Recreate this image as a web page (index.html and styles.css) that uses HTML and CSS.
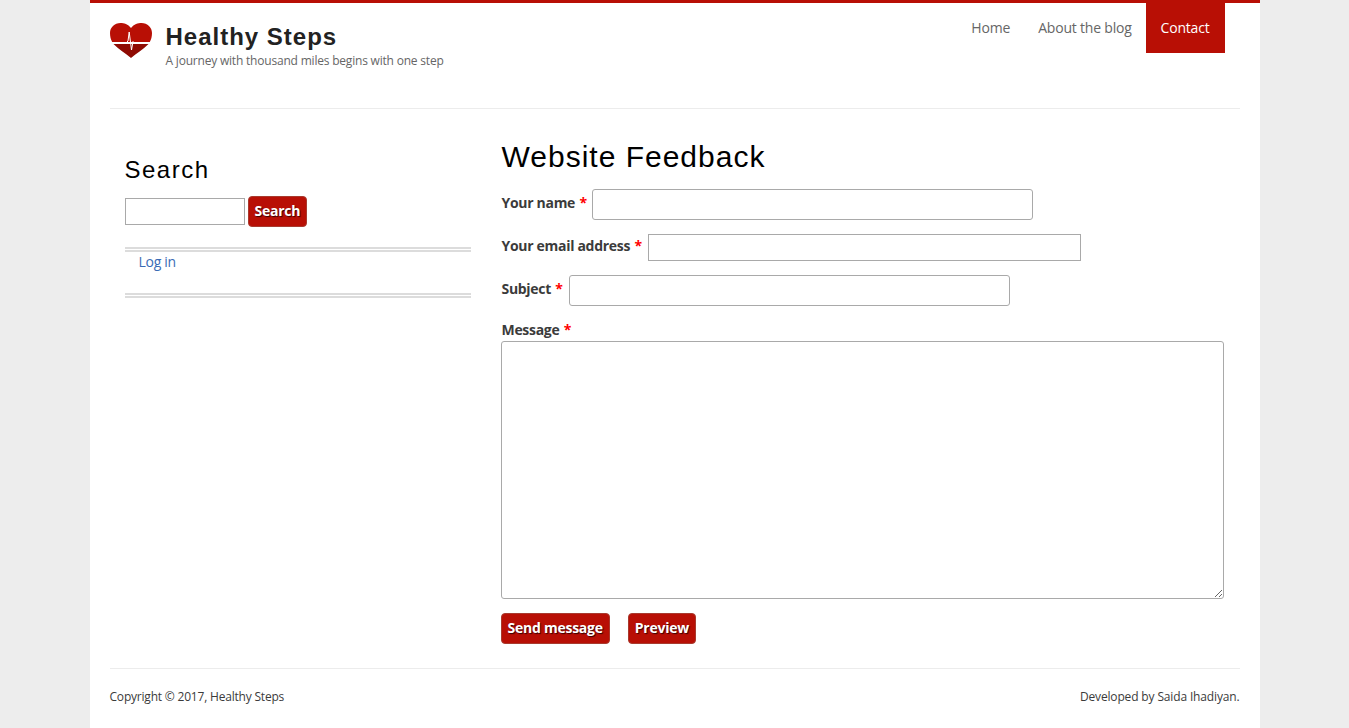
FILE: index.html
```html
<!DOCTYPE html>
<html lang="en">
<head>
<meta charset="utf-8">
<title>Website Feedback | Healthy Steps</title>
<link rel="stylesheet" href="styles.css">
</head>
<body>
<div class="page">
  <header class="site-header">
    <div class="brand">
      <svg class="logo" width="42" height="37" viewBox="0 0 42 37" aria-hidden="true">
        <path fill="#b80f05" d="M21 6C18 2 14 1 10.500 1 4.500 1 0 5.500 0 11c0 3.500 .8 6.500 2.200 9h37.600C41.200 17.500 42 14.500 42 11 42 5.500 37.500 1 31.500 1 28 1 24 2 21 6z"/>
        <path fill="#8f0b03" d="M3.500 22h35C33.500 27.500 26.500 31 21 36 15.500 31 8.500 27.500 3.500 22z"/>
        <path fill="none" stroke="#fff" stroke-width="1" d="M1.500 20.500h15l1.500-1.500 1.200-9 2.300 18 1.500-8.500 1 1H40.500"/>
      </svg>
      <div class="brand-text">
        <div class="site-name">Healthy Steps</div>
        <div class="site-slogan">A journey with thousand miles begins with one step</div>
      </div>
    </div>
    <nav class="main-nav">
      <a href="#">Home</a>
      <a href="#">About the blog</a>
      <a href="#" class="active">Contact</a>
    </nav>
  </header>
  <div class="content">
    <aside class="sidebar">
      <h2 class="block-title">Search</h2>
      <form class="search-form">
        <input type="text" class="search-input">
        <button type="button" class="btn">Search</button>
      </form>
      <div class="menu-block">
        <a href="#">Log in</a>
      </div>
    </aside>
    <main class="main">
      <h1 class="page-title">Website Feedback</h1>
      <form>
        <div class="field field-name">
          <label>Your name <span class="req">*</span></label>
          <input type="text" class="input input-name">
        </div>
        <div class="field field-email">
          <label>Your email address <span class="req">*</span></label>
          <input type="text" class="input input-email">
        </div>
        <div class="field field-subject">
          <label>Subject <span class="req">*</span></label>
          <input type="text" class="input input-subject">
        </div>
        <div class="field-message">
          <label>Message <span class="req">*</span></label>
          <textarea class="message"></textarea>
        </div>
        <div class="actions">
          <button type="button" class="btn">Send message</button>
          <button type="button" class="btn">Preview</button>
        </div>
      </form>
    </main>
  </div>
  <footer class="site-footer">
    <span class="copyright">Copyright © 2017, Healthy Steps</span>
    <span class="credit">Developed by <a href="#">Saida Ihadiyan</a>.</span>
  </footer>
</div>
</body>
</html>
```
FILE: styles.css
```css
* { box-sizing: border-box; }
html, body { margin: 0; padding: 0; }
body {
  background: #ededed;
  font-family: "Open Sans", "Noto Sans", sans-serif;
  font-size: 14px;
  color: #3b3b3b;
}
.page {
  width: 1170px;
  height: 728px;
  margin: 0 auto;
  padding: 0 20px;
  background: #fff;
  border-top: 3px solid #b80f05;
}
.site-header {
  display: flex;
  justify-content: space-between;
  height: 106px;
  border-bottom: 1px solid #ececec;
}
.brand { display: flex; padding-top: 19px; }
.logo { margin-right: 14px; flex: none; }
.site-name {
  font-family: "Liberation Sans", Arial, sans-serif;
  font-size: 24px;
  font-weight: bold;
  letter-spacing: 1px;
  line-height: 28px;
  color: #222;
  margin-top: 1px;
}
.site-slogan { font-size: 12px; line-height: 16px; color: #666; margin-top: 2px; letter-spacing: -0.2px; }
.main-nav { display: flex; height: 50px; margin-right: 15px; }
.main-nav a {
  padding: 0 14px;
  line-height: 50px;
  color: #666;
  text-decoration: none;
  letter-spacing: -0.2px;
}
.main-nav a.active { padding: 0 15px; background: #b80f05; color: #fff; }
.content {
  display: flex;
  height: 560px;
  padding: 0 15px;
  border-bottom: 1px solid #ececec;
}
.sidebar { width: 346px; margin-right: 30px; padding-top: 46px; flex: none; }
.block-title {
  margin: 0;
  font-family: "Liberation Sans", Arial, sans-serif;
  font-size: 24px;
  font-weight: normal;
  letter-spacing: 1.5px;
  line-height: 30px;
  color: #000;
}
.search-form { display: flex; align-items: center; margin-top: 11px; }
.search-input {
  width: 120px;
  height: 27px;
  border: 1px solid #a9a9a9;
  padding: 2px;
  margin: 0 3px 0 0;
}
.btn {
  height: 31px;
  padding: 0 6px 2px;
  background: #b80f05;
  border: 1px solid #a83a2e;
  border-radius: 4px;
  color: #fff;
  font-family: "Open Sans", "Noto Sans", sans-serif;
  font-size: 14px;
  font-weight: bold;
  letter-spacing: -0.25px;
  text-shadow: 1px 1px 1px #3a0000;
}
.menu-block {
  margin-top: 20px;
  height: 51px;
  padding: 0 14px;
  border-top: 5px double #dcdcdc;
  border-bottom: 5px double #dcdcdc;
  line-height: 20px;
}
.menu-block a { color: #3a6bb5; text-decoration: none; letter-spacing: -0.3px; }
.main { flex: 1; padding-top: 24px; }
.page-title {
  margin: 0 0 0 1px;
  font-family: "Liberation Sans", Arial, sans-serif;
  font-size: 30px;
  font-weight: normal;
  letter-spacing: 1px;
  line-height: 48px;
  color: #000;
}
label { display: block; padding-left: 1px; font-weight: bold; color: #3b3b3b; letter-spacing: -0.3px; }
.req { color: #f00; margin-left: 1px; }
.field { display: flex; align-items: center; }
.field label { margin-right: 6px; position: relative; top: -2px; }
.input { border: 1px solid #a9a9a9; padding: 2px; display: block; }
.field-name { margin-top: 8px; }
.field-name label { margin-right: 5px; }
.input-name { width: 441px; height: 31px; border-radius: 3px; }
.field-email { margin-top: 14px; }
.input-email { width: 433px; height: 27px; }
.field-subject { margin-top: 14px; }
.input-subject { width: 441px; height: 31px; border-radius: 3px; }
.field-message { margin-top: 14px; }
.field-message label { line-height: 20px; }
.message {
  display: block;
  width: 723px;
  height: 258px;
  border: 1px solid #a9a9a9;
  border-radius: 3px;
  margin-top: 1px;
  padding: 2px;
}
.actions { display: flex; gap: 18px; margin-top: 14px; }
.site-footer {
  display: flex;
  justify-content: space-between;
  padding-top: 20px;
  font-size: 12px;
  line-height: 16px;
  color: #3b3b3b;
}
.copyright { letter-spacing: -0.2px; }
.credit { letter-spacing: -0.15px; }
.site-footer a { color: #3b3b3b; text-decoration: none; }
```
